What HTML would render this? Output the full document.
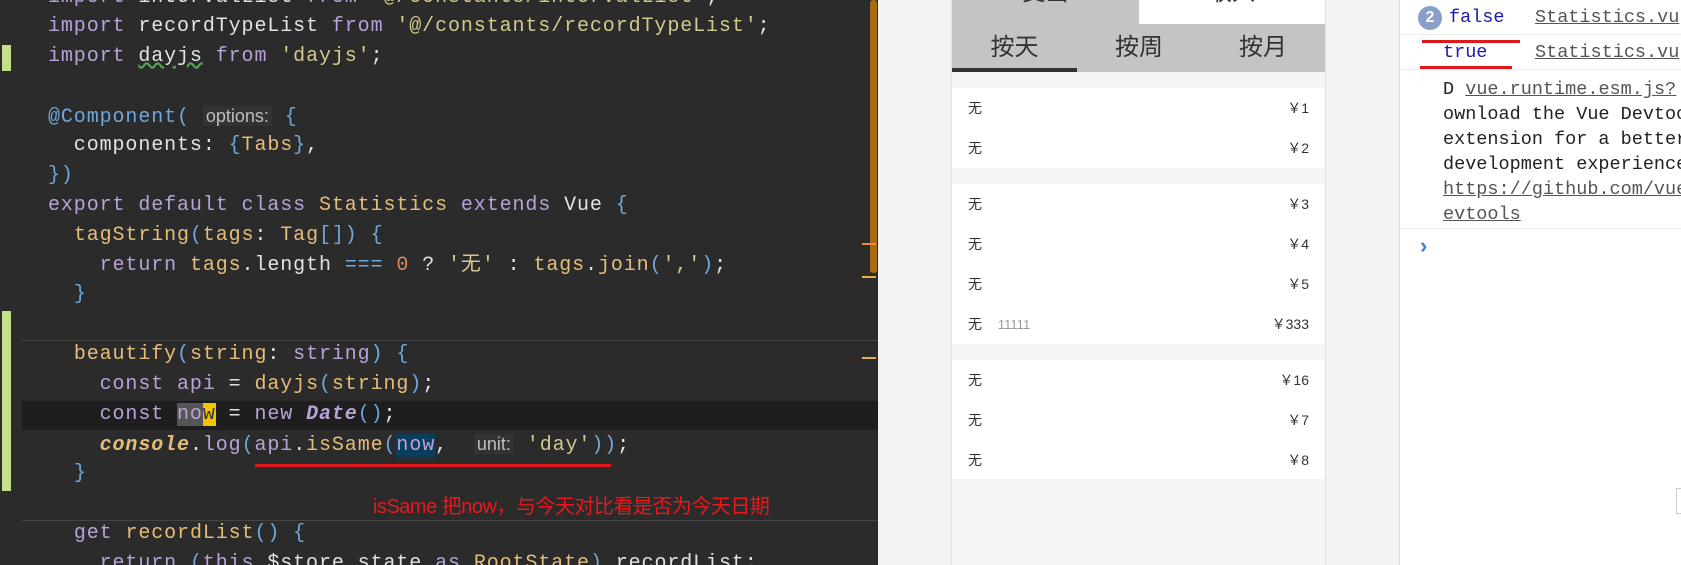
<!DOCTYPE html>
<html><head><meta charset="utf-8"><style>
*{margin:0;padding:0;box-sizing:border-box}
body{width:1681px;height:565px;overflow:hidden;background:#f3f3f3;position:relative;font-family:"Liberation Sans","Noto Sans CJK SC",sans-serif}
#ed{position:absolute;left:0;top:0;width:878px;height:565px;background:#2b2b2b;overflow:hidden}
.ln{position:absolute;left:48px;height:29px;line-height:29px;font-family:"Liberation Mono","Noto Sans CJK SC",monospace;font-size:20px;letter-spacing:0.9px;color:#e3e3e3;white-space:pre}
.k{color:#b9a2d8}.s{color:#d4c98c}.y{color:#e6bd78}.b{color:#6fa8dc}.o{color:#d88a5a}
.h{color:#bdbdbd;background:#333;font-family:"Liberation Sans",sans-serif;font-size:18px;letter-spacing:0;padding:0 3px}
.it{font-style:italic;font-weight:bold}
#ph{position:absolute;left:951px;top:0;width:375px;height:565px;background:#f4f4f4;border-left:1px solid #e2e2e2;border-right:1px solid #e2e2e2}
.row{position:absolute;left:0;width:373px;height:40px;line-height:40px;font-size:14px;color:#333}
.row .l{position:absolute;left:16px}.row .r{position:absolute;right:16px}
.grp{position:absolute;left:0;width:373px;background:#fff}
#dt{position:absolute;left:1399px;top:0;width:282px;height:565px;background:#fff;border-left:1px solid #ddd;font-family:"Liberation Mono",monospace;font-size:18.5px;color:#222}
.dl{position:absolute;white-space:pre;line-height:24px}
</style></head><body>
<div id="ed">
<div style="position:absolute;left:22px;top:401px;width:856px;height:29px;background:#1e1e1e"></div>
<div style="position:absolute;left:22px;top:340px;width:856px;height:1px;background:#444"></div>
<div style="position:absolute;left:22px;top:520px;width:856px;height:1px;background:#444"></div>
<div style="position:absolute;left:2px;top:45px;width:9px;height:26px;background:#c5de8a"></div>
<div style="position:absolute;left:2px;top:311px;width:9px;height:180px;background:#c5de8a"></div>
<div style="position:absolute;left:870px;top:0;width:7px;height:273px;background:#a86c12;border-radius:3px"></div>
<div style="position:absolute;left:862px;top:243px;width:14px;height:2px;background:#f28b3c"></div>
<div style="position:absolute;left:862px;top:276px;width:14px;height:2px;background:#e8b040"></div>
<div style="position:absolute;left:862px;top:357px;width:14px;height:2px;background:#e8b040"></div>
<div class="ln" style="top:-17px"><span class="k">import</span> intervalList <span class="k">from</span> <span class="s">'@/constants/intervalList'</span>;</div>
<div class="ln" style="top:12px"><span class="k">import</span> recordTypeList <span class="k">from</span> <span class="s">'@/constants/recordTypeList'</span>;</div>
<div class="ln" style="top:42px"><span class="k">import</span> <span style="text-decoration:underline wavy #5a5">dayjs</span> <span class="k">from</span> <span class="s">'dayjs'</span>;</div>
<div class="ln" style="top:102px"><span class="b">@Component(</span> <span class="h">options:</span> <span class="b">{</span></div>
<div class="ln" style="top:131px">  components: <span class="b">{</span><span class="y">Tabs</span><span class="b">}</span>,</div>
<div class="ln" style="top:161px"><span class="b">})</span></div>
<div class="ln" style="top:191px"><span class="k">export default class</span> <span class="y">Statistics</span> <span class="k">extends</span> Vue <span class="b">{</span></div>
<div class="ln" style="top:221px">  <span class="y">tagString</span><span class="b">(</span><span class="y">tags</span>: <span class="y">Tag</span><span class="b">[]) {</span></div>
<div class="ln" style="top:251px">    <span class="k">return</span> <span class="y">tags</span>.length <span class="b">===</span> <span class="o">0</span> ? <span class="s">'无'</span> : <span class="y">tags</span>.<span class="y">join</span><span class="b">(</span><span class="s">','</span><span class="b">)</span>;</div>
<div class="ln" style="top:280px">  <span class="b">}</span></div>
<div class="ln" style="top:340px">  <span class="y">beautify</span><span class="b">(</span><span class="y">string</span>: <span class="k">string</span><span class="b">) {</span></div>
<div class="ln" style="top:370px">    <span class="k">const</span> <span class="k">api</span> = <span class="y">dayjs</span><span class="b">(</span><span class="y">string</span><span class="b">)</span>;</div>
<div class="ln" style="top:400px">    <span class="k">const</span> <span class="k" style="background:#555">no</span><span style="background:#f5c400;color:#333">w</span> = <span class="k">new</span> <span class="k it">Date</span><span class="b">()</span>;</div>
<div class="ln" style="top:430px">    <span class="y it">console</span>.<span class="k">log</span><span class="b">(</span><span class="k">api</span>.<span class="y">isSame</span><span class="b">(</span><span class="k" style="background:#0b3d5c">now</span>,  <span class="h">unit:</span> <span class="s">'day'</span><span class="b">))</span>;</div>
<div class="ln" style="top:459px">  <span class="b">}</span></div>
<div class="ln" style="top:519px">  <span class="k">get</span> <span class="y">recordList</span><span class="b">() {</span></div>
<div class="ln" style="top:549px">    <span class="k">return</span> <span class="b">(</span><span class="k">this</span>.$store.state <span class="k">as</span> <span class="y">RootState</span><span class="b">)</span>.recordList;</div>
<div style="position:absolute;left:255px;top:464px;width:356px;height:3px;background:#e0191c"></div>
<div style="position:absolute;left:373px;top:490px;font-size:20px;color:#e8181c;white-space:nowrap;letter-spacing:-0.5px">isSame 把now，与今天对比看是否为今天日期</div>
</div>
<div id="ph">
<div style="position:absolute;left:0;top:0;width:187px;height:24px;background:#c4c4c4;overflow:hidden"><div style="position:absolute;left:0;width:187px;top:-27px;text-align:center;font-size:23px;color:#333">支出</div></div>
<div style="position:absolute;left:187px;top:0;width:186px;height:24px;background:#fff;overflow:hidden"><div style="position:absolute;left:0;width:186px;top:-27px;text-align:center;font-size:23px;color:#333">收入</div></div>
<div style="position:absolute;left:0;top:24px;width:373px;height:48px;background:#c4c4c4"></div>
<div style="position:absolute;left:0;top:26px;width:125px;line-height:44px;text-align:center;font-size:24px;color:#333">按天</div>
<div style="position:absolute;left:125px;top:26px;width:124px;line-height:44px;text-align:center;font-size:24px;color:#333">按周</div>
<div style="position:absolute;left:249px;top:26px;width:124px;line-height:44px;text-align:center;font-size:24px;color:#333">按月</div>
<div style="position:absolute;left:0;top:68px;width:125px;height:4px;background:#333"></div>
<div class="grp" style="top:88px;height:80px"></div>
<div class="grp" style="top:184px;height:160px"></div>
<div class="grp" style="top:360px;height:119px"></div>
<div class="row" style="top:88px"><span class="l">无</span><span class="r">￥1</span></div>
<div class="row" style="top:128px"><span class="l">无</span><span class="r">￥2</span></div>
<div class="row" style="top:184px"><span class="l">无</span><span class="r">￥3</span></div>
<div class="row" style="top:224px"><span class="l">无</span><span class="r">￥4</span></div>
<div class="row" style="top:264px"><span class="l">无</span><span class="r">￥5</span></div>
<div class="row" style="top:304px"><span class="l">无 <span style="color:#999;font-size:13px;margin-left:12px">11111</span></span><span class="r">￥333</span></div>
<div class="row" style="top:360px"><span class="l">无</span><span class="r">￥16</span></div>
<div class="row" style="top:400px"><span class="l">无</span><span class="r">￥7</span></div>
<div class="row" style="top:440px"><span class="l">无</span><span class="r">￥8</span></div>
</div>
<div id="dt">
<div style="position:absolute;left:18px;top:6px;width:24px;height:24px;border-radius:50%;background:#8a9fc9;color:#fff;font-family:'Liberation Sans';font-size:16px;text-align:center;line-height:24px;font-weight:bold">2</div>
<div class="dl" style="left:49px;top:6px;color:#1a1aa6">false</div>
<div class="dl" style="left:135px;top:6px;color:#555;text-decoration:underline">Statistics.vu</div>
<div style="position:absolute;left:0;top:34px;width:282px;height:1px;background:#eee"></div>
<div style="position:absolute;left:22px;top:40px;width:98px;height:3px;background:#e0191c"></div>
<div class="dl" style="left:43px;top:41px;color:#1a1aa6">true</div>
<div class="dl" style="left:135px;top:41px;color:#555;text-decoration:underline">Statistics.vu</div>
<div style="position:absolute;left:20px;top:66px;width:92px;height:3px;background:#e0191c"></div>
<div style="position:absolute;left:0;top:69px;width:282px;height:1px;background:#eee"></div>
<div class="dl" style="left:43px;top:77px;line-height:25px">D <u style="color:#555">vue.runtime.esm.js?</u>
ownload the Vue Devtools
extension for a better
development experience
<u style="color:#555">https://github.com/vue</u>
<u style="color:#555">evtools</u></div>
<div style="position:absolute;left:0;top:228px;width:282px;height:1px;background:#eee"></div>
<div class="dl" style="left:20px;top:234px;color:#3b7de0;font-family:'Liberation Sans';font-weight:bold;font-size:22px">›</div>
<div style="position:absolute;left:276px;top:488px;width:8px;height:26px;border:1px solid #ccc"></div>
</div>
</body></html>
